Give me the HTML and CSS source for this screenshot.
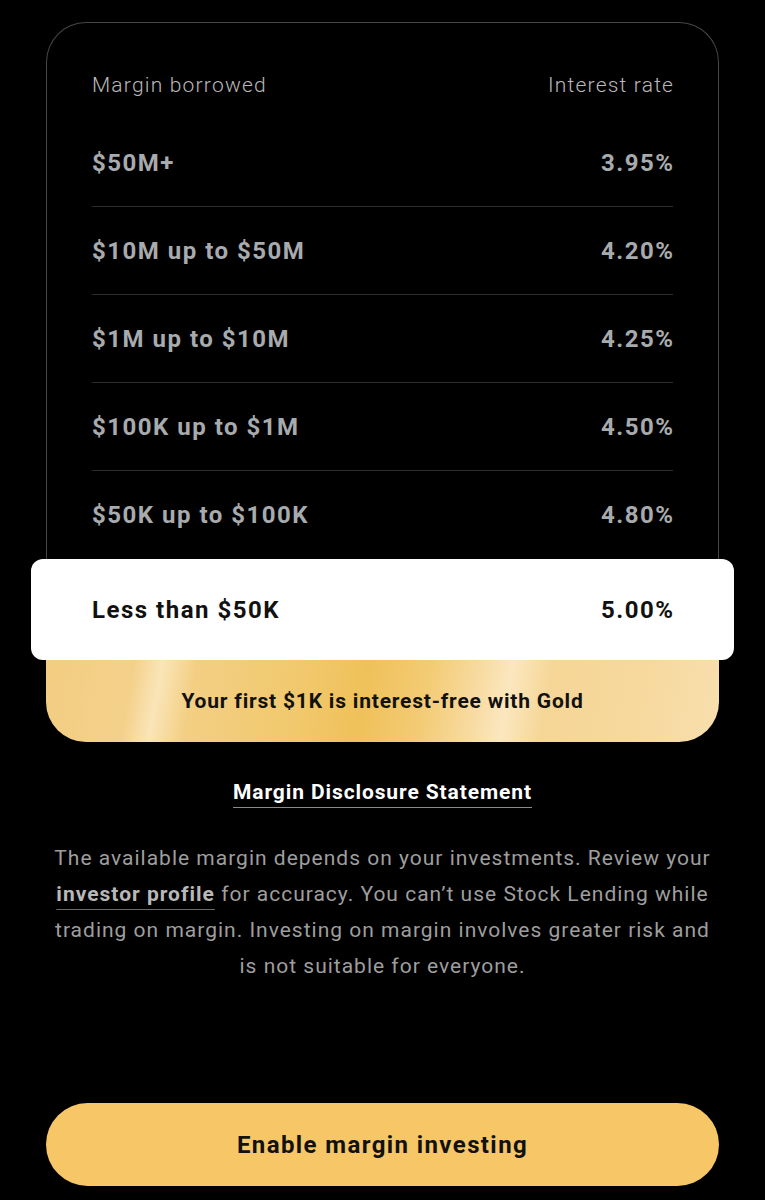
FILE: index.html
```html
<!DOCTYPE html>
<html lang="en">
<head>
<meta charset="utf-8">
<title>Margin rates</title>
<link rel="stylesheet" href="styles.css">
</head>
<body>
<main class="page">
  <section class="rates">
    <div class="table">
      <div class="head">
        <span>Margin borrowed</span>
        <span>Interest rate</span>
      </div>
      <div class="row"><span>$50M+</span><span>3.95%</span></div>
      <div class="row"><span>$10M up to $50M</span><span>4.20%</span></div>
      <div class="row"><span>$1M up to $10M</span><span>4.25%</span></div>
      <div class="row"><span>$100K up to $1M</span><span>4.50%</span></div>
      <div class="row"><span>$50K up to $100K</span><span>4.80%</span></div>
    </div>
    <div class="current"><span>Less than $50K</span><span>5.00%</span></div>
    <div class="gold">Your first $1K is interest-free with Gold</div>
  </section>
  <a class="disclosure" href="#">Margin Disclosure Statement</a>
  <p class="note">The available margin depends on your investments. Review your <a href="#">investor profile</a> for accuracy. You can’t use Stock Lending while trading on margin. Investing on margin involves greater risk and is not suitable for everyone.</p>
  <button class="cta" type="button">Enable margin investing</button>
</main>
</body>
</html>
```
FILE: styles.css
```css
html, body {
  margin: 0;
  background: #000;
}
body {
  font-family: Roboto, "Liberation Sans", sans-serif;
  -webkit-font-smoothing: antialiased;
}
.page {
  padding: 22px 46px 0;
  display: flex;
  flex-direction: column;
}
.rates {
  display: flex;
  flex-direction: column;
}
.table {
  border: 1.5px solid #474747;
  border-bottom: none;
  border-radius: 40px 40px 0 0;
  padding: 0 45px;
}
.head {
  display: flex;
  justify-content: space-between;
  align-items: center;
  height: 32px;
  margin-top: 46px;
  margin-bottom: 18px;
  font-size: 21px;
  font-weight: 300;
  letter-spacing: 1.2px;
  color: #b9b9b9;
}
.head span:last-child { margin-right: -1.2px; }
.row {
  display: flex;
  justify-content: space-between;
  align-items: center;
  height: 87px;
  border-bottom: 1px solid #2e2e2e;
  font-size: 24px;
  font-weight: 700;
  letter-spacing: 1.5px;
  color: #a8abae;
}
.row span:last-child, .current span:last-child { margin-right: -1.5px; }
.row:last-child {
  border-bottom: none;
  height: 88px;
}
.current {
  margin: 0 -15px;
  height: 101px;
  background: #fff;
  border-radius: 12px;
  display: flex;
  justify-content: space-between;
  align-items: center;
  padding: 0 61px;
  font-size: 24px;
  font-weight: 700;
  letter-spacing: 1.5px;
  color: #111;
  position: relative;
  z-index: 1;
}
.gold {
  height: 82px;
  border-radius: 0 0 40px 40px;
  display: flex;
  align-items: center;
  justify-content: center;
  font-size: 21px;
  font-weight: 700;
  letter-spacing: 0.8px;
  color: #111;
  background: linear-gradient(100deg,
    #f2cd82 0%, #f4d18b 13%, #fae5b8 17%, #f3cf84 22%,
    #f1c86c 38%, #efc15a 47%, #f3cb74 56%, #f8dca4 64%,
    #fbe7bf 68%, #f6d697 74%, #f7d99e 88%, #f8dfae 100%);
}
.disclosure {
  align-self: center;
  margin-top: 37px;
  font-size: 21px;
  font-weight: 700;
  letter-spacing: 0.9px;
  color: #fff;
  text-decoration: none;
  line-height: 26px;
  padding-bottom: 2px;
  border-bottom: 1px solid #8a8a8a;
}
.note {
  margin: 32px 0 0;
  text-align: center;
  font-size: 21px;
  line-height: 36px;
  font-weight: 400;
  letter-spacing: 1px;
  color: #9e9e9e;
}
.note a {
  color: #b8b8b8;
  font-weight: 700;
  text-decoration: underline;
  text-decoration-color: #6a6a6a;
  text-decoration-thickness: 1px;
  text-underline-offset: 8px;
}
.cta {
  margin-top: 119px;
  height: 83px;
  border: none;
  border-radius: 42px;
  background: #f6c667;
  font-family: inherit;
  font-size: 24px;
  font-weight: 700;
  letter-spacing: 1.4px;
  color: #111;
  cursor: pointer;
}
```
